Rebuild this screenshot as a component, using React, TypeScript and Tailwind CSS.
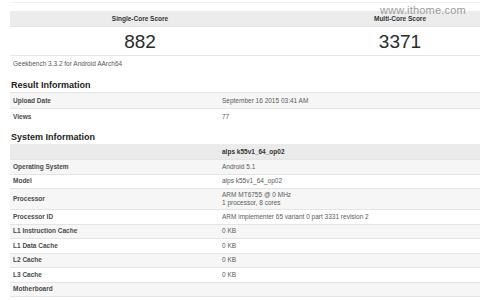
import React from "react";

type Row = { label: string; value: React.ReactNode; h?: string };

const sysRows: Row[] = [
  { label: "Operating System", value: "Android 5.1" },
  { label: "Model", value: "alps k55v1_64_op02" },
  {
    label: "Processor",
    value: (
      <div className="flex flex-col leading-[8px]">
        <span>ARM MT6755 @ 0 MHz</span>
        <span>1 processor, 8 cores</span>
      </div>
    ),
    h: "h-[21px]",
  },
  { label: "Processor ID", value: "ARM implementer 65 variant 0 part 3331 revision 2" },
  { label: "L1 Instruction Cache", value: "0 KB" },
  { label: "L1 Data Cache", value: "0 KB" },
  { label: "L2 Cache", value: "0 KB" },
  { label: "L3 Cache", value: "0 KB" },
  { label: "Motherboard", value: "" },
];

function InfoRow({ row, shade }: { row: Row; shade: boolean }) {
  return (
    <div
      className={`flex items-center border-t border-[#e4e4e4] ${row.h ?? "h-[14.5px]"} ${
        shade ? "bg-[#f6f6f6]" : "bg-white"
      }`}
    >
      <div className="w-[209px] pl-[3px] text-[6.5px] font-bold text-[#4a4a4a]">{row.label}</div>
      <div className="flex-1 pl-[3px] text-[6.5px] text-[#5a5a5a]">{row.value}</div>
    </div>
  );
}

export default function App() {
  return (
    <div className="relative w-[480px] h-[300px] overflow-hidden bg-white font-['Liberation_Sans',Arial,sans-serif]">
      <div className="ml-[10px] w-[520px]">
        <div className="h-[2px]" />
        <div className="h-px bg-[#efefef]" />
        <div className="h-[8px]" />
        <div className="grid grid-cols-2 h-[16px] bg-[#ececec] border-b border-[#e2e2e2] items-center text-[6.5px] font-bold text-[#333]">
          <div className="text-center">Single-Core Score</div>
          <div className="text-center">Multi-Core Score</div>
        </div>
        <div className="grid grid-cols-2 h-[29px] border-b border-[#e6e6e6] items-center text-[19px] text-[#2a2a2a]">
          <div className="text-center leading-none">882</div>
          <div className="text-center leading-none">3371</div>
        </div>
        <div className="h-[16px] flex items-center pl-[3px] text-[6.5px] text-[#555]">
          Geekbench 3.3.2 for Android AArch64
        </div>
        <div className="h-[8px]" />
        <div className="h-[12px] flex items-center pl-px text-[9px] font-bold text-[#222]">Result Information</div>
        <div>
          <InfoRow row={{ label: "Upload Date", value: "September 16 2015 03:41 AM", h: "h-[16px]" }} shade />
          <InfoRow row={{ label: "Views", value: "77", h: "h-[16px]" }} shade={false} />
        </div>
        <div className="h-[7px]" />
        <div className="h-[13px] flex items-center pl-px text-[9px] font-bold text-[#222]">System Information</div>
        <div className="flex items-center h-[15px] bg-[#ebebeb]">
          <div className="w-[209px]" />
          <div className="flex-1 pl-[3px] text-[6.5px] font-bold text-[#333]">alps k55v1_64_op02</div>
        </div>
        {sysRows.map((r, i) => (
          <InfoRow key={r.label} row={r} shade={i % 2 === 0} />
        ))}
        <div className="border-t border-[#e4e4e4]" />
      </div>
      <div className="absolute left-[380px] top-[3px] text-[11px] leading-[14px] text-[#9a9a9a] tracking-[0.2px]">
        www.ithome.com
      </div>
    </div>
  );
}
